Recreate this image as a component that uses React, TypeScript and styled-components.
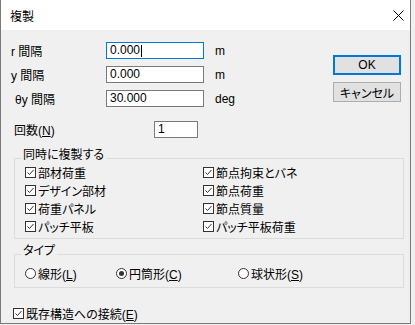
import styled, { createGlobalStyle } from 'styled-components'

const GlobalStyle = createGlobalStyle`
  html, body {
    margin: 0;
    padding: 0;
    background: #f0f0f0;
  }
  body {
    font-family: "Liberation Sans Narrow", "Liberation Sans", "Noto Sans CJK JP", sans-serif;
    font-size: 12px;
    color: #000;
    font-feature-settings: "palt";
  }
`

const Window = styled.div`
  box-sizing: border-box;
  width: 411px;
  height: 324px;
  background: #f0f0f0;
  border: 1px solid #7a7a7a;
  border-top: none;
  display: flex;
  flex-direction: column;
`

const TitleBar = styled.div`
  height: 30px;
  flex-shrink: 0;
  background: #fff;
  display: flex;
  align-items: center;
  justify-content: space-between;
  padding: 0 6px 0 9px;
`

const Title = styled.span`
  font-family: "Noto Sans CJK JP", sans-serif;
  font-size: 12px;
`

const Body = styled.div`
  padding: 12px 9px 0 9px;
  display: flex;
  flex-direction: column;
  align-items: flex-start;
`

const TopRow = styled.div`
  display: flex;
  justify-content: space-between;
  align-self: stretch;
`

const Fields = styled.div`
  display: grid;
  grid-template-columns: 96px 98px auto;
  grid-auto-rows: 17px;
  row-gap: 7px;
  align-items: center;
`

const FieldLabel = styled.span<{ $indent?: number }>`
  padding-left: ${(p) => p.$indent ?? 1}px;
  white-space: pre;
`

const EditBox = styled.div<{ $focused?: boolean; $width?: number }>`
  box-sizing: border-box;
  width: ${(p) => p.$width ?? 98}px;
  height: 17px;
  background: #fff;
  border: 1px solid ${(p) => (p.$focused ? '#0078d7' : '#7a7a7a')};
  padding: 0 3px;
  display: flex;
  align-items: center;
  line-height: 15px;
`

const Caret = styled.span`
  display: inline-block;
  width: 1px;
  height: 12px;
  background: #000;
  margin-left: 1px;
`

const Unit = styled.span`
  padding-left: 11px;
`

const Buttons = styled.div`
  display: flex;
  flex-direction: column;
  gap: 7px;
  margin-top: 13px;
`

const Button = styled.div<{ $default?: boolean }>`
  box-sizing: border-box;
  width: 68px;
  height: 20px;
  background: #e1e1e1;
  border: ${(p) => (p.$default ? '2px solid #0078d7' : '1px solid #adadad')};
  display: flex;
  align-items: center;
  justify-content: center;
`

const CountRow = styled.div`
  display: flex;
  align-items: center;
  height: 17px;
  margin-top: 14px;
  padding-left: 4px;
`

const CountLabel = styled.span`
  width: 140px;
`

const Key = styled.span`
  text-decoration: underline;
`

const Group = styled.div<{ $top: number; $height: number }>`
  position: relative;
  box-sizing: border-box;
  width: 390px;
  height: ${(p) => p.$height}px;
  margin: ${(p) => p.$top}px 0 0 4px;
  border: 1px solid #dcdcdc;
  flex-shrink: 0;
`

const Legend = styled.span`
  position: absolute;
  top: -11px;
  left: 6px;
  padding: 0 2px;
  line-height: 14px;
  background: #f0f0f0;
`

const CheckGrid = styled.div`
  display: grid;
  grid-template-columns: 178px auto;
  grid-template-rows: repeat(4, 18px);
  grid-auto-flow: column;
  padding: 4px 0 0 10px;
`

const RadioRow = styled.div`
  display: grid;
  grid-template-columns: 91px 122px auto;
  height: 18px;
  padding: 9px 0 0 10px;
`

const Item = styled.label`
  display: flex;
  align-items: center;
  gap: 2px;
  height: 18px;
  white-space: nowrap;
`

const Box = styled.span`
  box-sizing: border-box;
  width: 11px;
  height: 11px;
  border: 1px solid #333;
  background: #fff;
  display: flex;
  flex-shrink: 0;
`

const Round = styled.span`
  box-sizing: border-box;
  width: 11px;
  height: 11px;
  border: 1px solid #333;
  border-radius: 50%;
  background: #fff;
  display: flex;
  align-items: center;
  justify-content: center;
  flex-shrink: 0;
`

const Dot = styled.span`
  width: 5px;
  height: 5px;
  border-radius: 50%;
  background: #333;
`

const Footer = styled.div`
  display: flex;
  align-items: center;
  height: 18px;
  margin: 16px 0 0 3px;
  flex-shrink: 0;
`

function Check({ children }: { children: React.ReactNode }) {
  return (
    <Item>
      <Box>
        <svg width="9" height="9" viewBox="0 0 9 9">
          <path d="M1.5 4.5 L3.5 6.5 L7.5 2" fill="none" stroke="#333" strokeWidth="1" />
        </svg>
      </Box>
      <span>{children}</span>
    </Item>
  )
}

function Radio({ checked, children }: { checked?: boolean; children: React.ReactNode }) {
  return (
    <Item>
      <Round>{checked && <Dot />}</Round>
      <span>{children}</span>
    </Item>
  )
}

export default function App() {
  return (
    <>
      <GlobalStyle />
      <Window>
        <TitleBar>
          <Title>複製</Title>
          <svg width="11" height="11" viewBox="0 0 11 11">
            <path d="M0.5 0.5 L10.5 10.5 M10.5 0.5 L0.5 10.5" stroke="#000" strokeWidth="1" />
          </svg>
        </TitleBar>
        <Body>
          <TopRow>
            <Fields>
              <FieldLabel>r 間隔</FieldLabel>
              <EditBox $focused>
                0.000
                <Caret />
              </EditBox>
              <Unit>m</Unit>
              <FieldLabel>y 間隔</FieldLabel>
              <EditBox>0.000</EditBox>
              <Unit>m</Unit>
              <FieldLabel $indent={5}>θy 間隔</FieldLabel>
              <EditBox>30.000</EditBox>
              <Unit>deg</Unit>
            </Fields>
            <Buttons>
              <Button $default>OK</Button>
              <Button>キャンセル</Button>
            </Buttons>
          </TopRow>
          <CountRow>
            <CountLabel>
              回数(<Key>N</Key>)
            </CountLabel>
            <EditBox $width={44}>1</EditBox>
          </CountRow>
          <Group $top={20} $height={81}>
            <Legend>同時に複製する</Legend>
            <CheckGrid>
              <Check>部材荷重</Check>
              <Check>デザイン部材</Check>
              <Check>荷重パネル</Check>
              <Check>パッチ平板</Check>
              <Check>節点拘束とバネ</Check>
              <Check>節点荷重</Check>
              <Check>節点質量</Check>
              <Check>パッチ平板荷重</Check>
            </CheckGrid>
          </Group>
          <Group $top={15} $height={34}>
            <Legend>タイプ</Legend>
            <RadioRow>
              <Radio>
                線形(<Key>L</Key>)
              </Radio>
              <Radio checked>
                円筒形(<Key>C</Key>)
              </Radio>
              <Radio>
                球状形(<Key>S</Key>)
              </Radio>
            </RadioRow>
          </Group>
          <Footer>
            <Check>
              既存構造への接続(<Key>E</Key>)
            </Check>
          </Footer>
        </Body>
      </Window>
    </>
  )
}
